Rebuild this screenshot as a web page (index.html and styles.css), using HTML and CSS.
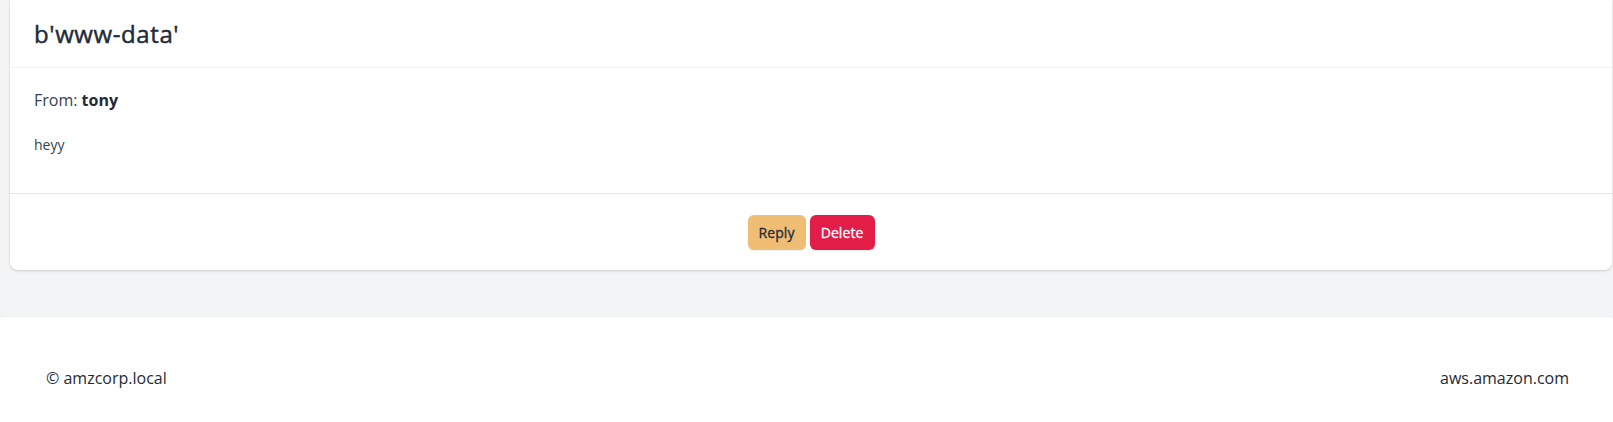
FILE: index.html
```html
<!DOCTYPE html>
<html lang="en">
<head>
<meta charset="utf-8">
<title>Message</title>
<link rel="stylesheet" href="styles.css">
</head>
<body>
<div class="page">
  <main class="main">
    <article class="card">
      <header class="card-header">
        <h1 class="title">b'www-data'</h1>
      </header>
      <section class="card-body">
        <p class="from">From: <strong>tony</strong></p>
        <p class="message">heyy</p>
      </section>
      <footer class="card-footer">
        <button class="btn btn-reply" type="button">Reply</button>
        <button class="btn btn-delete" type="button">Delete</button>
      </footer>
    </article>
  </main>
  <footer class="site-footer">
    <span class="copy">© amzcorp.local</span>
    <span class="link">aws.amazon.com</span>
  </footer>
</div>
</body>
</html>
```
FILE: styles.css
```css
* { box-sizing: border-box; }
html, body {
  margin: 0;
  padding: 0;
  background: #f3f4f6;
  font-family: "Open Sans", "Liberation Sans", sans-serif;
  color: #1f2937;
}
.page {
  display: flex;
  flex-direction: column;
  min-height: 422px;
}
.main {
  padding: 0 1px 46px 10px;
}
.card {
  background: #fff;
  border-radius: 0 0 8px 8px;
  box-shadow: 0 1px 3px rgba(0,0,0,0.12), 0 1px 2px rgba(0,0,0,0.06);
}
.card-header {
  height: 68px;
  display: flex;
  align-items: center;
  padding: 0 24px;
  border-bottom: 1px solid #f1f2f4;
}
.title {
  margin: 0;
  font-size: 24px;
  font-weight: 400;
  letter-spacing: 0.6px;
  -webkit-text-stroke: 0.45px #1f2937;
  color: #1f2937;
  line-height: 32px;
}
.card-body {
  height: 126px;
  padding: 20px 24px 0;
  border-bottom: 1px solid #e2e4e8;
}
.from {
  margin: 0;
  font-size: 16px;
  line-height: 24px;
  color: #374151;
}
.from strong { color: #1f2937; font-weight: 700; }
.message {
  margin: 23px 0 0;
  font-size: 14px;
  line-height: 20px;
  color: #374151;
}
.card-footer {
  height: 76px;
  display: flex;
  justify-content: center;
  align-items: center;
  gap: 4px;
}
.btn {
  height: 35px;
  padding: 0 11px;
  border: none;
  border-radius: 6px;
  font-family: "Open Sans", "Liberation Sans", sans-serif;
  font-size: 14px;
  font-weight: 400;
  letter-spacing: 0.1px;
  -webkit-text-stroke: 0.3px currentColor;
  box-shadow: 0 1px 2px rgba(0,0,0,0.08);
  cursor: pointer;
}
.btn-reply { background: #f0bd74; color: #1f2937; }
.btn-delete { background: #e11d48; color: #fff; }
.site-footer {
  flex: 1;
  background: #fff;
  border-top: 1px solid #eceef1;
  border-radius: 4px 4px 0 0;
  display: flex;
  justify-content: space-between;
  padding: 49px 44px 0 46px;
  font-size: 16px;
  line-height: 24px;
  color: #1f2937;
}
```
